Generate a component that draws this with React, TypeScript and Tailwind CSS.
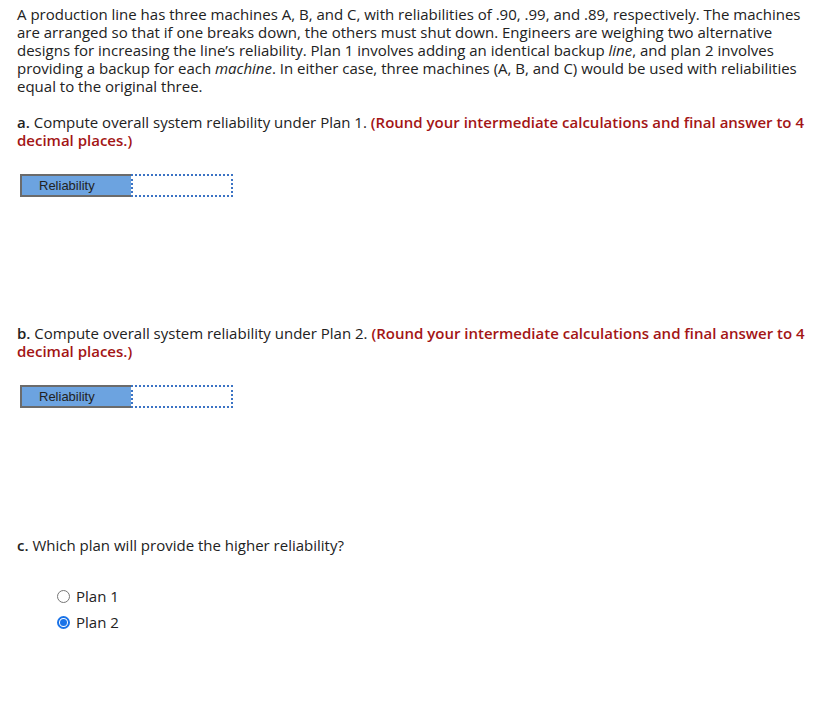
import React from "react";

function RelTable() {
  return (
    <div className="flex h-[23px] w-[213px] ml-[3px]">
      <div className="w-[111px] h-full bg-[#6ca3e0] border-2 border-r-0 border-[#6b6b6b] flex items-center pl-[17px] text-[13px] text-[#222] font-['Liberation_Sans',Arial,sans-serif]">
        Reliability
      </div>
      <div className="flex-1 h-full border-2 border-dotted border-[#3b73c4] bg-white" />
    </div>
  );
}

function Radio({ checked, label }: { checked?: boolean; label: string }) {
  return (
    <div className="flex items-center h-[26px]">
      {checked ? (
        <span className="w-[13px] h-[13px] rounded-full border-2 border-[#1a73e8] flex items-center justify-center mr-[6px]">
          <span className="w-[7px] h-[7px] rounded-full bg-[#1a73e8]" />
        </span>
      ) : (
        <span className="w-[13px] h-[13px] rounded-full border border-[#767676] bg-white mr-[6px]" />
      )}
      <span>{label}</span>
    </div>
  );
}

export default function App() {
  return (
    <div className="bg-white w-[829px] h-[722px] text-[#222] text-[15px] leading-[18px] font-['Open_Sans',sans-serif] pl-[17px] pt-[5px] pr-[10px]">
      <p>
        A production line has three machines A, B, and C, with reliabilities of .90, .99, and .89, respectively. The machines
        are arranged so that if one breaks down, the others must shut down. Engineers are weighing two alternative
        designs for increasing the line’s reliability. Plan 1 involves adding an identical backup <i>line</i>, and plan 2 involves
        providing a backup for each <i>machine</i>. In either case, three machines (A, B, and C) would be used with reliabilities
        equal to the original three.
      </p>
      <p className="mt-[18px]">
        <span className="font-semibold">a.</span> Compute overall system reliability under Plan 1.{" "}
        <span className="font-semibold text-[#a31515]">
          (Round your intermediate calculations and final answer to 4<br />decimal places.)
        </span>
      </p>
      <div className="mt-[25px]">
        <RelTable />
      </div>
      <p className="mt-[127px]">
        <span className="font-semibold">b.</span> Compute overall system reliability under Plan 2.{" "}
        <span className="font-semibold text-[#a31515]">
          (Round your intermediate calculations and final answer to 4<br />decimal places.)
        </span>
      </p>
      <div className="mt-[25px]">
        <RelTable />
      </div>
      <p className="mt-[128px]">
        <span className="font-semibold">c.</span> Which plan will provide the higher reliability?
      </p>
      <div className="mt-[29px] ml-[40px]">
        <Radio label="Plan 1" />
        <Radio checked label="Plan 2" />
      </div>
    </div>
  );
}
